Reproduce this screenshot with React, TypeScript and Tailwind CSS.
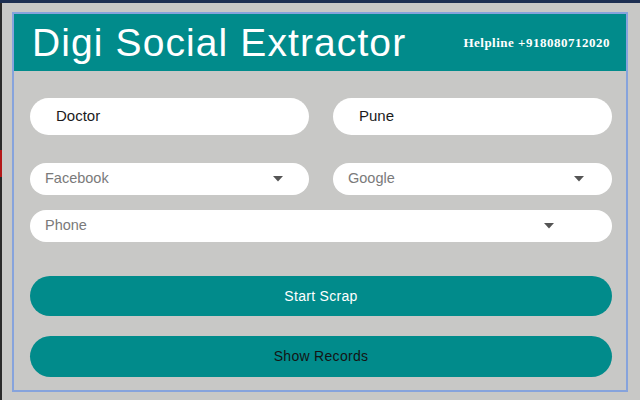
const teal = 'bg-[#018b8b]';

function Caret() {
  return (
    <svg width="10" height="6" viewBox="0 0 10 6" className="shrink-0">
      <path d="M0 0 L10 0 L5 5.5 Z" fill="#555555" />
    </svg>
  );
}

function TextPill({ value }: { value: string }) {
  return (
    <div className="flex h-[37px] items-center rounded-full bg-white pl-[26px] text-[15px] text-[#1b1b1b]">
      {value}
    </div>
  );
}

function SelectPill({ label, caretRight }: { label: string; caretRight: string }) {
  return (
    <div className={`flex h-[32px] items-center justify-between rounded-full bg-white pl-[15px] ${caretRight}`}>
      <span className="text-[14.5px] text-[#7a7a7a]">{label}</span>
      <Caret />
    </div>
  );
}

export default function App() {
  return (
    <div
      className="flex h-[400px] w-[640px] flex-col overflow-hidden bg-[#c8c8c6]"
      style={{ fontFamily: '"Liberation Sans", Arial, sans-serif' }}
    >
      <div className="h-[3px] w-full shrink-0 bg-[#1d2f52]" />
      <div className="flex flex-1">
        {/* window edge on the left */}
        <div className="flex w-[2px] flex-col">
          <div className="h-[147px] bg-[#2a2a2a]" />
          <div className="h-[27px] bg-[#b31818]" />
          <div className="flex-1 bg-[#2a2a2a]" />
        </div>

        <div className="ml-[10px] mt-[9px]">
          <div className="flex h-[380px] w-[616px] flex-col border-2 border-[#86a3dc]">
            <header className={`flex h-[57px] items-center justify-between pl-[18px] pr-[16px] ${teal}`}>
              <h1 className="text-[39px] leading-none tracking-[1.1px] text-white">Digi Social Extractor</h1>
              <p
                className="text-[13px] font-bold tracking-[0.5px] text-white"
                style={{ fontFamily: '"Liberation Serif", "Times New Roman", serif' }}
              >
                Helpline +918080712020
              </p>
            </header>

            <div className="flex flex-col pl-[16px] pr-[14px] pt-[27px]">
              <div className="grid grid-cols-2 gap-x-[24px]">
                <TextPill value="Doctor" />
                <TextPill value="Pune" />
              </div>

              <div className="mt-[28px] grid grid-cols-2 gap-x-[24px]">
                <SelectPill label="Facebook" caretRight="pr-[26px]" />
                <SelectPill label="Google" caretRight="pr-[28px]" />
              </div>

              <div className="mt-[15px]">
                <SelectPill label="Phone" caretRight="pr-[58px]" />
              </div>

              <button
                type="button"
                className={`mt-[34px] h-[40px] w-full rounded-full text-[14px] tracking-[0.3px] text-white ${teal}`}
              >
                Start Scrap
              </button>
              <button
                type="button"
                className={`mt-[20px] h-[41px] w-full rounded-full text-[14px] tracking-[0.3px] text-[#141414] ${teal}`}
              >
                Show Records
              </button>
            </div>
          </div>
        </div>
      </div>
    </div>
  );
}
